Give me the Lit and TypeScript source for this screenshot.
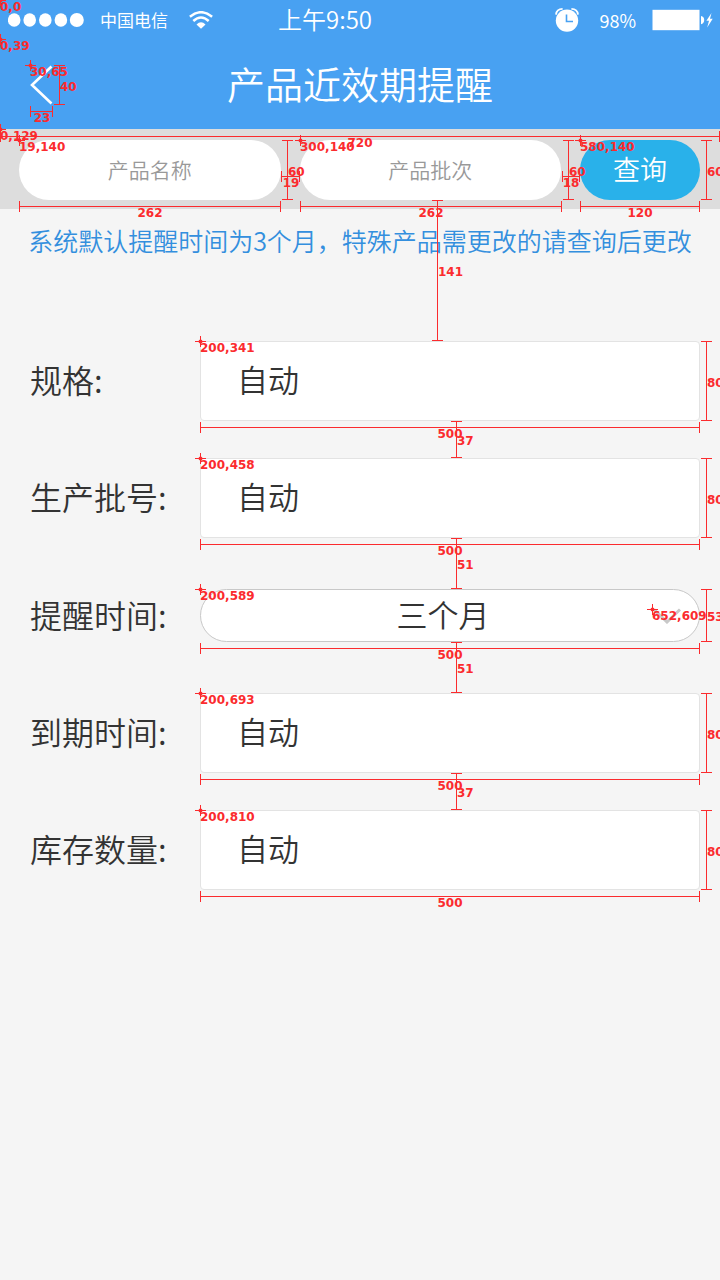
import { LitElement, html, svg, css } from "lit";
import { customElement, state } from "lit/decorators.js";

type Mark = [x: number, y: number];
type Span = [from: number, to: number, at: number, label: string];

const MARKS: Mark[] = [
  [0, 0], [0, 39], [30, 65], [0, 129], [19, 140], [300, 140], [580, 140],
  [200, 341], [200, 458], [200, 589], [652, 609], [200, 693], [200, 810],
];

// Horizontal spans: x1, x2, y, label
const H_SPANS: Span[] = [
  [30, 52, 111, "23"],
  [0, 719, 136, "720"],
  [281, 299, 176, "19"],
  [562, 579, 176, "18"],
  [19, 280, 206, "262"],
  [300, 561, 206, "262"],
  [580, 699, 206, "120"],
  [200, 699, 427, "500"],
  [200, 699, 544, "500"],
  [200, 699, 648, "500"],
  [200, 699, 779, "500"],
  [200, 699, 896, "500"],
];

// Vertical spans: y1, y2, x, label
const V_SPANS: Span[] = [
  [65, 104, 59, "40"],
  [140, 199, 287, "60"],
  [140, 199, 568, "60"],
  [140, 199, 706, "60"],
  [200, 340, 437, "141"],
  [421, 457, 456, "37"],
  [538, 588, 456, "51"],
  [642, 692, 456, "51"],
  [773, 809, 456, "37"],
  [341, 420, 706, "80"],
  [458, 537, 706, "80"],
  [589, 641, 706, "53"],
  [693, 772, 706, "80"],
  [810, 889, 706, "80"],
];

@customElement("spec-overlay")
export class SpecOverlay extends LitElement {
  static styles = css`
    :host {
      position: absolute;
      inset: 0;
      overflow: hidden;
      pointer-events: none;
    }
    .layer {
      display: block;
      width: 100%;
      height: 100%;
    }
    .line {
      stroke: #fb2b2e;
      stroke-width: 1;
      fill: none;
      shape-rendering: crispEdges;
    }
    .dot {
      fill: #fb2b2e;
    }
    .label {
      fill: #fb2b2e;
      font: bold 12px "DejaVu Sans", sans-serif;
    }
    .middle {
      text-anchor: middle;
    }
  `;

  private mark([x, y]: Mark) {
    const cx = x + 0.5;
    const cy = y + 0.5;
    return svg`
      <path class="line" d="M${x - 5} ${cy}h11M${cx} ${y - 5}v11"></path>
      <circle class="dot" cx=${cx} cy=${cy} r="2"></circle>
      <text class="label" x=${x} y=${y + 11}>${x},${y}</text>`;
  }

  private across([from, to, y, label]: Span) {
    return svg`
      <path class="line" d="M${from} ${y + 0.5}H${to + 1}M${from + 0.5} ${y - 5}v11M${to + 0.5} ${y - 5}v11"></path>
      <text class="label middle" x=${Math.round((from + to + 1) / 2)} y=${y + 11}>${label}</text>`;
  }

  private down([from, to, x, label]: Span) {
    return svg`
      <path class="line" d="M${x + 0.5} ${from}V${to + 1}M${x - 5} ${from + 0.5}h11M${x - 5} ${to + 0.5}h11"></path>
      <text class="label" x=${x + 1} y=${Math.round((from + to) / 2) + 6}>${label}</text>`;
  }

  render() {
    return html`<svg class="layer" aria-hidden="true">
      ${H_SPANS.map((s) => this.across(s))}
      ${V_SPANS.map((s) => this.down(s))}
      ${MARKS.map((m) => this.mark(m))}
    </svg>`;
  }
}

@customElement("status-bar")
export class StatusBar extends LitElement {
  static styles = css`
    :host {
      display: flex;
      align-items: center;
      height: 40px;
      padding: 0 6px 0 8px;
      color: #fff;
      font-family: "Noto Sans CJK SC", sans-serif;
      font-weight: 400;
    }
    svg {
      display: block;
      flex: none;
    }
    .carrier {
      margin: 0 21px 0 16px;
      font-size: 17px;
      line-height: 24px;
    }
    .time {
      margin-left: 65px;
      padding-bottom: 2px;
      font-size: 24px;
      line-height: 32px;
      font-weight: 350;
    }
    .right {
      display: flex;
      align-items: center;
      margin-left: auto;
    }
    .percent {
      margin: 0 16px 0 20px;
      font-size: 18px;
      line-height: 32px;
    }
  `;

  render() {
    return html`
      <svg width="76" height="14" viewBox="0 0 76 14" fill="#fff" aria-hidden="true">
        ${[6.2, 21.7, 37.3, 52.9].map((x) => svg`<ellipse cx=${x} cy="7" rx="6.3" ry="6.8"></ellipse>`)}
        <ellipse cx="68.8" cy="7" rx="7" ry="7"></ellipse>
      </svg>
      <span class="carrier">中国电信</span>
      <svg width="24" height="18" viewBox="0 0 24 18" fill="none" stroke="#fff" stroke-width="2.5" aria-hidden="true">
        <path d="M.9 5.800Q12-3.400 23.100 5.800M4.300 10Q12 3 19.700 10"></path>
        <path d="M7.500 13.600Q12 9 16.500 13.600L12 17.800Z" fill="#fff" stroke="none"></path>
      </svg>
      <span class="time">上午9:50</span>
      <div class="right">
        <svg width="24" height="24" viewBox="0 0 24 24" aria-hidden="true">
          <circle cx="12" cy="12.6" r="11.2" fill="#fff"></circle>
          <path d="M1 6.600Q1.600 1 7.600.9M23 6.600Q22.400 1 16.400.9" fill="none" stroke="#fff" stroke-width="1.8"></path>
          <path d="M11.500 6.500v7h6.500" fill="none" stroke="#48a1f2" stroke-width="1.6"></path>
        </svg>
        <span class="percent">98%</span>
        <svg width="62" height="22" viewBox="0 0 62 22" fill="#fff" aria-hidden="true">
          <rect x=".5" y=".8" width="47" height="20.4"></rect>
          <path d="M49 7q3.200.6 3.200 4T49 15.200Z"></path>
          <path d="M59.500 4L54.400 11.800H57L55.200 18.500L60.700 9.800H58Z"></path>
        </svg>
      </div>
    `;
  }
}

@customElement("app-root")
export class AppRoot extends LitElement {
  static styles = css`
    :host {
      display: block;
      position: relative;
      min-height: 100vh;
      overflow: hidden;
      background: #f5f5f5;
      color: #333;
      font-family: "Noto Sans CJK SC", sans-serif;
      font-weight: 350;
    }
    * {
      box-sizing: border-box;
    }
    input,
    select,
    button {
      margin: 0;
      font: inherit;
      color: inherit;
      outline: none;
    }
    .header {
      background: #48a1f2;
      color: #fff;
    }
    .title-bar {
      display: grid;
      grid-template-columns: 60px 1fr 60px;
      align-items: center;
      height: 89px;
    }
    .back {
      display: block;
      padding: 0 0 0 30px;
      border: 0;
      background: none;
    }
    .back svg {
      display: block;
    }
    .title {
      margin: 0;
      padding-bottom: 4px;
      font-size: 38px;
      line-height: 56px;
      font-weight: 350;
      text-align: center;
    }
    .search {
      display: flex;
      gap: 19px;
      padding: 11px 20px 9px 19px;
      background: #ddd;
    }
    .query {
      flex: 1;
      min-width: 0;
      height: 60px;
      padding: 0 24px 2px;
      border: 0;
      border-radius: 30px;
      background: #fff;
      font-size: 21px;
      text-align: center;
    }
    .query::placeholder {
      color: #999;
      opacity: 1;
    }
    .submit {
      width: 120px;
      height: 60px;
      padding: 0 0 4px;
      border: 0;
      border-radius: 30px;
      background: #29b1ea;
      color: #fff;
      font-size: 27px;
    }
    .note {
      margin: 0;
      padding: 13px 0 17px;
      color: #338fde;
      font-size: 25px;
      line-height: 36px;
      text-align: center;
    }
    .form {
      display: grid;
      gap: 37px;
      padding: 66px 20px 40px 30px;
      font-size: 31px;
    }
    .row {
      display: grid;
      grid-template-columns: 170px 1fr;
      align-items: center;
    }
    .caption {
      padding-bottom: 4px;
      font-size: 32px;
    }
    .value {
      width: 100%;
      height: 80px;
      padding: 0 36px 6px;
      border: 1px solid #e3e3e3;
      border-radius: 4px;
      background: #fff;
    }
    .picker {
      display: grid;
      align-items: center;
      margin: 14px 0;
    }
    .choice {
      grid-area: 1 / 1;
      width: 100%;
      height: 53px;
      padding: 0 24px 4px 10px;
      border: 1px solid #c8c8c8;
      border-radius: 27px;
      background: #fff;
      appearance: none;
      text-align: center;
      text-align-last: center;
    }
    .chevron {
      grid-area: 1 / 1;
      justify-self: end;
      margin-right: 19px;
      pointer-events: none;
    }
  `;

  @state() private months = "3";

  private field(id: string, label: string) {
    return html`<div class="row">
      <label class="caption" for=${id}>${label}:</label>
      <input class="value" id=${id} type="text" value="自动" />
    </div>`;
  }

  render() {
    return html`
      <header class="header">
        <status-bar></status-bar>
        <div class="title-bar">
          <button class="back" type="button" aria-label="返回">
            <svg width="23" height="40" viewBox="0 0 23 40" fill="none" stroke="#fff" stroke-width="2.6">
              <path d="M21.500 1.500L2 20L21.500 38.500"></path>
            </svg>
          </button>
          <h1 class="title">产品近效期提醒</h1>
        </div>
      </header>
      <form class="search" @submit=${(e: Event) => e.preventDefault()}>
        <input class="query" type="text" placeholder="产品名称" aria-label="产品名称" />
        <input class="query" type="text" placeholder="产品批次" aria-label="产品批次" />
        <button class="submit" type="submit">查询</button>
      </form>
      <p class="note">系统默认提醒时间为3个月，特殊产品需更改的请查询后更改</p>
      <form class="form" @submit=${(e: Event) => e.preventDefault()}>
        ${this.field("spec", "规格")}
        ${this.field("batch", "生产批号")}
        <div class="row">
          <label class="caption" for="remind">提醒时间:</label>
          <div class="picker">
            <select
              class="choice"
              id="remind"
              .value=${this.months}
              @change=${(e: Event) => (this.months = (e.target as HTMLSelectElement).value)}
            >
              <option value="3">三个月</option>
            </select>
            <svg class="chevron" width="28" height="16" viewBox="0 0 28 16" fill="none" stroke="#c8c8c8" stroke-width="3" aria-hidden="true">
              <path d="M1 1.500L14 14L27 1.500"></path>
            </svg>
          </div>
        </div>
        ${this.field("expiry", "到期时间")}
        ${this.field("stock", "库存数量")}
      </form>
      <spec-overlay></spec-overlay>
    `;
  }
}
